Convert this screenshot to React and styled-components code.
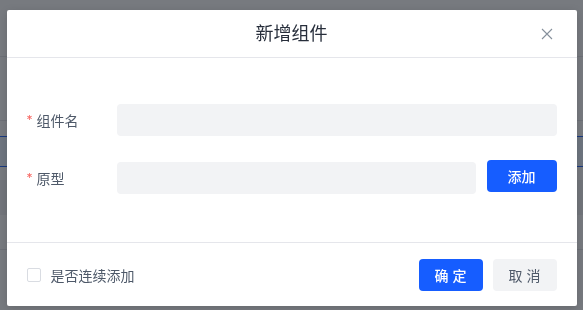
import React from "react";
import styled, { createGlobalStyle } from "styled-components";

const Global = createGlobalStyle`
  html, body { margin: 0; padding: 0; background: #fff; }
  body { font-family: Inter, "Noto Sans CJK SC", "Noto Sans", sans-serif; -webkit-font-smoothing: antialiased; }
  * { box-sizing: border-box; }
`;

const Page = styled.div`
  width: 583px;
  height: 310px;
  display: flex;
  flex-direction: column;
  background: #fff;
`;

const Stripe = styled.div`
  height: ${(p) => p.$h}px;
  flex: none;
  background: ${(p) => p.$bg || "#fff"};
  border-bottom: ${(p) => (p.$line ? `1px solid ${p.$line}` : "none")};
  border-top: ${(p) => (p.$top ? `1px solid ${p.$top}` : "none")};
`;

const Mask = styled.div`
  position: fixed;
  inset: 0;
  background: rgba(29, 33, 41, 0.6);
  display: flex;
  justify-content: center;
  align-items: flex-start;
  padding-top: 10px;
`;

const Dialog = styled.div`
  width: 570px;
  background: #fff;
  border-radius: 2px;
  display: flex;
  flex-direction: column;
  box-shadow: 0 2px 8px rgba(0, 0, 0, 0.15);
`;

const Header = styled.div`
  height: 48px;
  border-bottom: 1px solid #e5e6eb;
  display: flex;
  align-items: center;
  justify-content: center;
  position: relative;
`;

const Title = styled.div`
  font-size: 18px;
  color: #272e3b;
  font-weight: 400;
  line-height: 24px;
`;

const Close = styled.button`
  position: absolute;
  right: 23px;
  top: 17px;
  width: 14px;
  height: 14px;
  padding: 0;
  border: none;
  background: transparent;
  display: flex;
  align-items: center;
  justify-content: center;
  cursor: pointer;
`;

const Body = styled.div`
  padding: 46px 20px 48px;
  display: flex;
  flex-direction: column;
  gap: 24px;
`;

const Row = styled.div`
  display: flex;
  align-items: flex-start;
`;

const Label = styled.div`
  width: 90px;
  flex: none;
  height: 32px;
  margin-top: ${(p) => p.$offset || 0}px;
  display: flex;
  align-items: center;
  font-size: 14px;
  color: #4e5969;
`;

const Star = styled.span`
  color: #f76560;
  margin-right: 4px;
  font-size: 12px;
  position: relative;
  top: -1px;
`;

const Input = styled.div`
  flex: 1;
  height: 32px;
  margin-top: ${(p) => p.$offset || 0}px;
  background: #f2f3f5;
  border-radius: 4px;
`;

const Button = styled.button`
  flex: none;
  width: ${(p) => p.$w || 64}px;
  height: 32px;
  margin-left: ${(p) => p.$ml || 0}px;
  border: none;
  border-radius: 4px;
  font-family: inherit;
  font-size: 14px;
  font-weight: ${(p) => (p.$primary ? 500 : 400)};
  letter-spacing: ${(p) => (p.$spaced ? "4px" : "0")};
  text-indent: ${(p) => (p.$spaced ? "4px" : "0")};
  background: ${(p) => (p.$primary ? "#165dff" : "#f2f3f5")};
  color: ${(p) => (p.$primary ? "#fff" : "#4e5969")};
  padding: 0;
  cursor: pointer;
`;

const Footer = styled.div`
  border-top: 1px solid #e5e6eb;
  height: 64px;
  padding: 16px 20px 0;
  display: flex;
  align-items: flex-start;
  justify-content: space-between;
`;

const Check = styled.label`
  display: flex;
  align-items: center;
  height: 32px;
  gap: 10px;
  font-size: 14px;
  color: #4e5969;
`;

const Box = styled.span`
  width: 14px;
  height: 14px;
  border: 1px solid #d9dce2;
  border-radius: 2px;
  background: #fff;
`;

const Actions = styled.div`
  display: flex;
  gap: 10px;
`;

export default function App() {
  return (
    <>
      <Global />
      <Page>
        <Stripe $h={57} $line="#e5e6eb" />
        <Stripe $h={64} $line="#e5e6eb" />
        <Stripe $h={15} />
        <Stripe $h={31} $bg="#e8f3ff" $top="#165dff" $line="#165dff" />
        <Stripe $h={13} />
        <Stripe $h={35} $bg="#f2f3f5" />
        <Stripe $h={35} $line="#e5e6eb" />
        <Stripe $h={59} />
      </Page>
      <Mask>
        <Dialog>
          <Header>
            <Title>新增组件</Title>
            <Close aria-label="关闭">
              <svg width="12" height="12" viewBox="0 0 12 12">
                <path d="M1 1L11 11M11 1L1 11" stroke="#86909c" strokeWidth="1.1" fill="none" />
              </svg>
            </Close>
          </Header>
          <Body>
            <Row>
              <Label>
                <Star>*</Star>组件名
              </Label>
              <Input />
            </Row>
            <Row>
              <Label $offset={2}>
                <Star>*</Star>原型
              </Label>
              <Input $offset={2} />
              <Button $primary $w={70} $ml={11}>添加</Button>
            </Row>
          </Body>
          <Footer>
            <Check>
              <Box />
              是否连续添加
            </Check>
            <Actions>
              <Button $primary $spaced>确定</Button>
              <Button $spaced>取消</Button>
            </Actions>
          </Footer>
        </Dialog>
      </Mask>
    </>
  );
}
